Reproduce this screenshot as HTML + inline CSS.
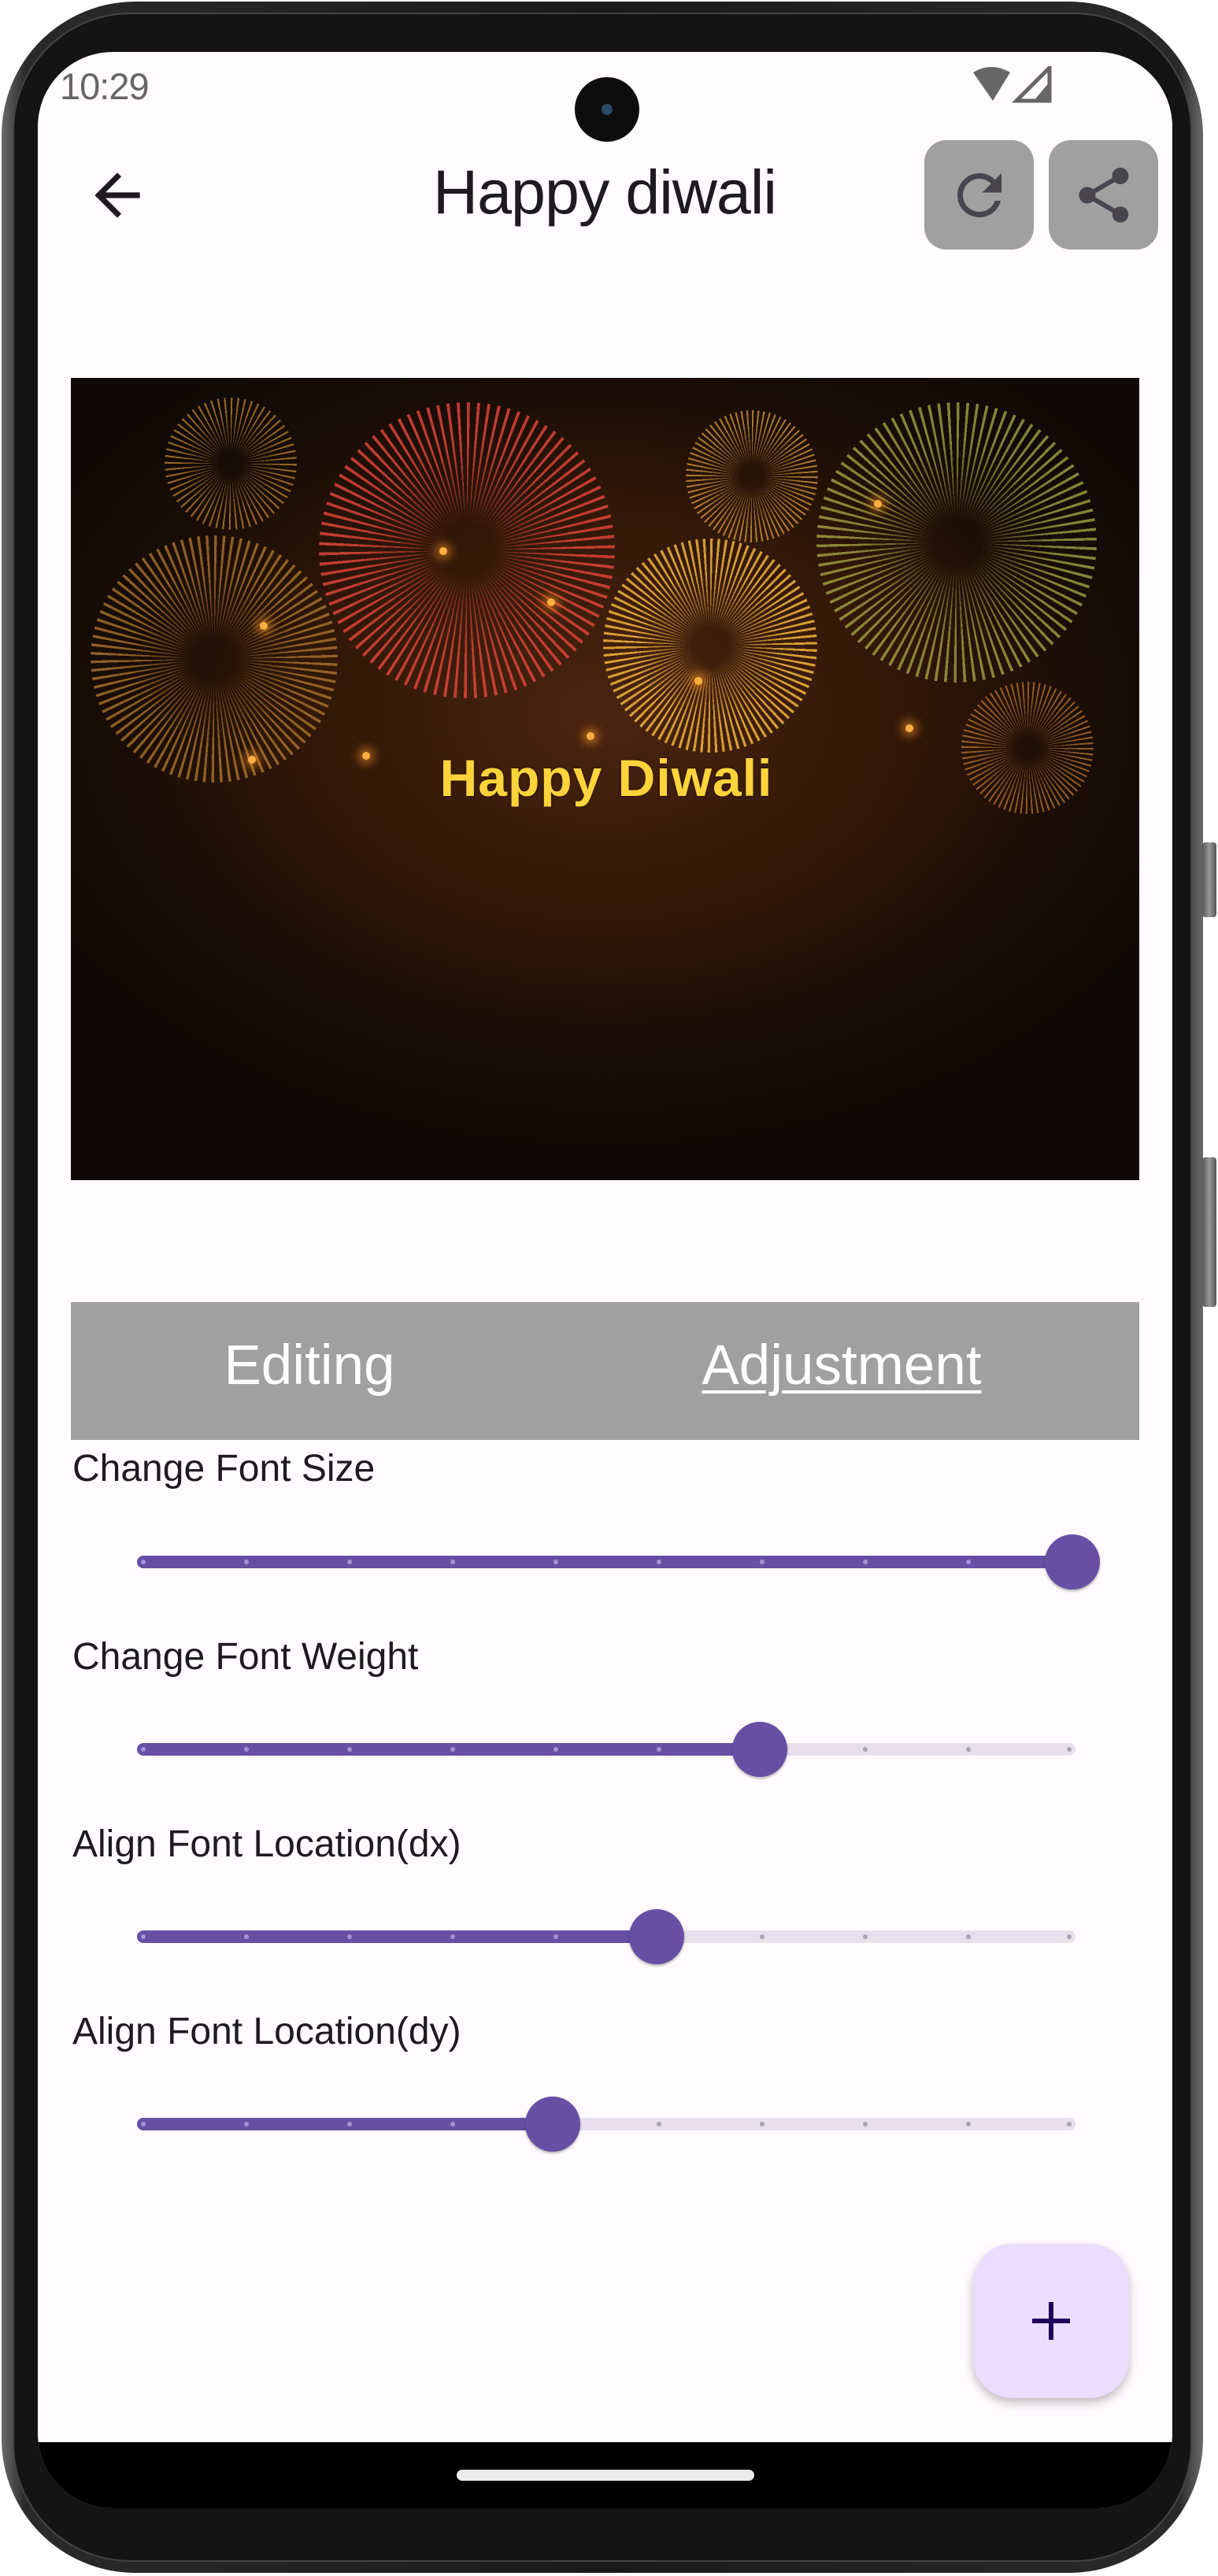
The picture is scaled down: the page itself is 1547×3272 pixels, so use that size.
<!DOCTYPE html>
<html><head><meta charset="utf-8">
<style>
*{margin:0;padding:0;box-sizing:border-box}
html,body{width:1547px;height:3272px;background:#fff;overflow:hidden;font-family:"Liberation Sans",sans-serif}
.abs{position:absolute}
#frame{left:2px;top:2px;width:1526px;height:3266px;border-radius:170px;background:linear-gradient(90deg,#6a6a6a,#2a2a2a 2%,#1a1a1a 50%,#2a2a2a 98%,#6a6a6a);}
#bezel{left:16px;top:16px;width:1498px;height:3238px;border-radius:150px;background:#141414;border:2px solid #444}
#screen{left:48px;top:66px;width:1441px;height:3120px;border-radius:95px;background:#fffbfe;overflow:hidden}
.btn{position:absolute;right:2px;width:18px;background:linear-gradient(90deg,#555,#999,#555);border-radius:4px}
.burst{position:absolute;border-radius:50%;
 -webkit-mask:radial-gradient(circle,transparent 12%,rgba(0,0,0,.6) 25%,#000 50%,#000 88%,transparent 100%);}
.spark{position:absolute;width:10px;height:10px;border-radius:50%;background:#ffb040;box-shadow:0 0 12px 5px rgba(255,150,40,.6)}
.label{position:absolute;left:92px;font-size:48px;color:#1d1b20}
.track{position:absolute;left:174px;width:1192px;height:16px;border-radius:8px;background:#e7e0ec}
.act{position:absolute;left:174px;height:16px;border-radius:8px;background:#6750a4}
.thumb{position:absolute;width:70px;height:70px;border-radius:50%;background:#6750a4;box-shadow:0 2px 3px rgba(0,0,0,.3)}
.dot{position:absolute;width:6px;height:6px;border-radius:50%}
</style></head><body>
<div id="frame" class="abs"></div>
<div class="btn" style="top:1070px;height:95px"></div>
<div class="btn" style="top:1470px;height:190px"></div>
<div id="bezel" class="abs"></div>
<div id="screen" class="abs">
  <div class="abs" style="left:28px;top:16px;font-size:47px;color:#666;letter-spacing:-1px">10:29</div>
  <div class="abs" style="left:682px;top:32px;width:82px;height:82px;border-radius:50%;background:#0d0d0d"></div>
  <div class="abs" style="left:716px;top:66px;width:14px;height:14px;border-radius:50%;background:#2a4a6a"></div>
  <svg class="abs" style="left:1183px;top:18px" width="110" height="48" viewBox="0 0 110 48">
    <path d="M5 8 Q28 -6 52 8 L30 44 Z" fill="#666"/>
    <path d="M102 2 L102 44 L60 44 Z" fill="none" stroke="#666" stroke-width="5"/>
    <path d="M102 20 L102 44 L82 44 Z" fill="#666"/>
  </svg>
  <svg class="abs" style="left:58px;top:139px" width="86" height="86" viewBox="0 0 24 24"><path d="M20 11H7.83l5.59-5.59L12 4l-8 8 8 8 1.41-1.41L7.83 13H20v-2z" fill="#1d1b20"/></svg>
  <div class="abs" style="left:470px;top:132px;width:500px;text-align:center;font-size:79px;color:#1d1b20;letter-spacing:-1px">Happy diwali</div>
  <div class="abs" style="left:1126px;top:112px;width:139px;height:139px;border-radius:28px;background:#a0a0a0"></div>
  <div class="abs" style="left:1284px;top:112px;width:139px;height:139px;border-radius:28px;background:#a0a0a0"></div>
  <svg class="abs" style="left:1154px;top:140px" width="84" height="84" viewBox="0 0 24 24"><path d="M17.65 6.35A7.958 7.958 0 0 0 12 4c-4.42 0-7.99 3.58-7.99 8s3.57 8 7.99 8c3.73 0 6.84-2.55 7.73-6h-2.08A5.99 5.99 0 0 1 12 18c-3.31 0-6-2.69-6-6s2.69-6 6-6c1.66 0 3.14.69 4.22 1.78L13 11h7V4l-2.35 2.35z" fill="#49454f"/></svg>
  <svg class="abs" style="left:1312px;top:140px" width="84" height="84" viewBox="0 0 24 24"><path d="M18 16.08c-.76 0-1.44.3-1.96.77L8.91 12.7c.05-.23.09-.46.09-.7s-.04-.47-.09-.7l7.05-4.11c.54.5 1.25.81 2.04.81 1.66 0 3-1.34 3-3s-1.34-3-3-3-3 1.34-3 3c0 .24.04.47.09.7L8.04 9.81C7.5 9.31 6.79 9 6 9c-1.66 0-3 1.34-3 3s1.34 3 3 3c.79 0 1.5-.31 2.04-.81l7.12 4.16c-.05.21-.08.43-.08.65 0 1.61 1.31 2.92 2.92 2.92s2.92-1.31 2.92-2.92-1.31-2.92-2.92-2.92z" fill="#49454f"/></svg>
  <div class="abs" style="left:42px;top:414px;width:1357px;height:1019px;overflow:hidden;background:radial-gradient(ellipse 60% 55% at 50% 42%,#4a2410 0%,#321808 45%,#1a0d06 75%,#0e0906 100%)">
    <div class="burst" style="left:119px;top:25px;width:168px;height:168px;background:repeating-conic-gradient(rgba(200,140,50,.7) 0 1.6deg,transparent 1.6deg 6deg)"></div>
    <div class="burst" style="left:315px;top:31px;width:376px;height:376px;background:repeating-conic-gradient(rgba(230,70,60,.8) 0 1.2deg,transparent 1.2deg 4deg)"></div>
    <div class="burst" style="left:781px;top:41px;width:168px;height:168px;background:repeating-conic-gradient(rgba(210,150,60,.75) 0 1.6deg,transparent 1.6deg 5deg)"></div>
    <div class="burst" style="left:947px;top:31px;width:356px;height:356px;background:repeating-conic-gradient(rgba(170,170,70,.75) 0 1.2deg,transparent 1.2deg 4deg)"></div>
    <div class="burst" style="left:676px;top:204px;width:272px;height:272px;background:repeating-conic-gradient(rgba(240,180,60,.85) 0 1.4deg,transparent 1.4deg 4deg)"></div>
    <div class="burst" style="left:25px;top:200px;width:314px;height:314px;background:repeating-conic-gradient(rgba(190,130,50,.7) 0 1.3deg,transparent 1.3deg 4deg)"></div>
    <div class="burst" style="left:1131px;top:386px;width:168px;height:168px;background:repeating-conic-gradient(rgba(190,120,50,.7) 0 1.6deg,transparent 1.6deg 5deg)"></div>
    <div class="spark" style="left:468px;top:215px"></div>
    <div class="spark" style="left:605px;top:280px"></div>
    <div class="spark" style="left:792px;top:380px"></div>
    <div class="spark" style="left:655px;top:450px"></div>
    <div class="spark" style="left:370px;top:475px"></div>
    <div class="spark" style="left:1060px;top:440px"></div>
    <div class="spark" style="left:1020px;top:155px"></div>
    <div class="spark" style="left:240px;top:310px"></div>
    <div class="spark" style="left:225px;top:480px"></div>
    <div class="abs" style="left:420px;top:470px;width:520px;text-align:center;font-size:66px;font-weight:bold;color:#ffd43b;letter-spacing:1px;text-shadow:0 0 3px rgba(0,0,0,.4)">Happy Diwali</div>
  </div>
  <div class="abs" style="left:42px;top:1588px;width:1357px;height:175px;background:#a0a0a0"></div>
  <div class="abs" style="left:45px;top:1628px;width:600px;text-align:center;font-size:71px;color:#fff">Editing</div>
  <div class="abs" style="left:721px;top:1628px;width:600px;text-align:center;font-size:71px;color:#fff;text-decoration:underline;text-decoration-thickness:4px;text-underline-offset:8px">Adjustment</div>
  <div class="label" style="top:1772px;left:44px">Change Font Size</div>
  <div class="label" style="top:2011px;left:44px">Change Font Weight</div>
  <div class="label" style="top:2249px;left:44px">Align Font Location(dx)</div>
  <div class="label" style="top:2487px;left:44px">Align Font Location(dy)</div>
  <div class="abs" style="left:1188px;top:2784px;width:198px;height:196px;border-radius:50px;background:#eaddff;box-shadow:0 6px 12px rgba(0,0,0,.25)"></div>
  <div class="abs" style="left:1263px;top:2879px;width:48px;height:6px;background:#21005d"></div>
  <div class="abs" style="left:1284px;top:2858px;width:6px;height:48px;background:#21005d"></div>
  <div class="abs" style="left:0;top:3036px;width:1441px;height:90px;background:#000"></div>
  <div class="abs" style="left:532px;top:3071px;width:378px;height:14px;border-radius:7px;background:#ebebeb"></div>
</div>
<div style="position:absolute;left:0;top:0">
  <div class="track" style="top:1976px"></div><div class="act" style="top:1976px;width:1188px"></div>
  <div class="track" style="top:2214px"></div><div class="act" style="top:2214px;width:790px"></div>
  <div class="track" style="top:2452px"></div><div class="act" style="top:2452px;width:660px"></div>
  <div class="track" style="top:2690px"></div><div class="act" style="top:2690px;width:528px"></div>
  <div style="position:absolute;left:0;top:1981px">
    <div class="dot" style="left:179px;background:#a593d8"></div><div class="dot" style="left:310px;background:#a593d8"></div><div class="dot" style="left:441px;background:#a593d8"></div><div class="dot" style="left:572px;background:#a593d8"></div><div class="dot" style="left:703px;background:#a593d8"></div><div class="dot" style="left:834px;background:#a593d8"></div><div class="dot" style="left:965px;background:#a593d8"></div><div class="dot" style="left:1096px;background:#a593d8"></div><div class="dot" style="left:1227px;background:#a593d8"></div>
  </div>
  <div style="position:absolute;left:0;top:2219px">
    <div class="dot" style="left:179px;background:#a593d8"></div><div class="dot" style="left:310px;background:#a593d8"></div><div class="dot" style="left:441px;background:#a593d8"></div><div class="dot" style="left:572px;background:#a593d8"></div><div class="dot" style="left:703px;background:#a593d8"></div><div class="dot" style="left:834px;background:#a593d8"></div><div class="dot" style="left:1096px;background:#aaa2b4"></div><div class="dot" style="left:1227px;background:#aaa2b4"></div><div class="dot" style="left:1355px;background:#aaa2b4"></div>
  </div>
  <div style="position:absolute;left:0;top:2457px">
    <div class="dot" style="left:179px;background:#a593d8"></div><div class="dot" style="left:310px;background:#a593d8"></div><div class="dot" style="left:441px;background:#a593d8"></div><div class="dot" style="left:572px;background:#a593d8"></div><div class="dot" style="left:703px;background:#a593d8"></div><div class="dot" style="left:965px;background:#aaa2b4"></div><div class="dot" style="left:1096px;background:#aaa2b4"></div><div class="dot" style="left:1227px;background:#aaa2b4"></div><div class="dot" style="left:1355px;background:#aaa2b4"></div>
  </div>
  <div style="position:absolute;left:0;top:2695px">
    <div class="dot" style="left:179px;background:#a593d8"></div><div class="dot" style="left:310px;background:#a593d8"></div><div class="dot" style="left:441px;background:#a593d8"></div><div class="dot" style="left:572px;background:#a593d8"></div><div class="dot" style="left:834px;background:#aaa2b4"></div><div class="dot" style="left:965px;background:#aaa2b4"></div><div class="dot" style="left:1096px;background:#aaa2b4"></div><div class="dot" style="left:1227px;background:#aaa2b4"></div><div class="dot" style="left:1355px;background:#aaa2b4"></div>
  </div>
  <div class="thumb" style="left:1327px;top:1949px"></div>
  <div class="thumb" style="left:930px;top:2187px"></div>
  <div class="thumb" style="left:799px;top:2425px"></div>
  <div class="thumb" style="left:667px;top:2663px"></div>
</div>
</body></html>
